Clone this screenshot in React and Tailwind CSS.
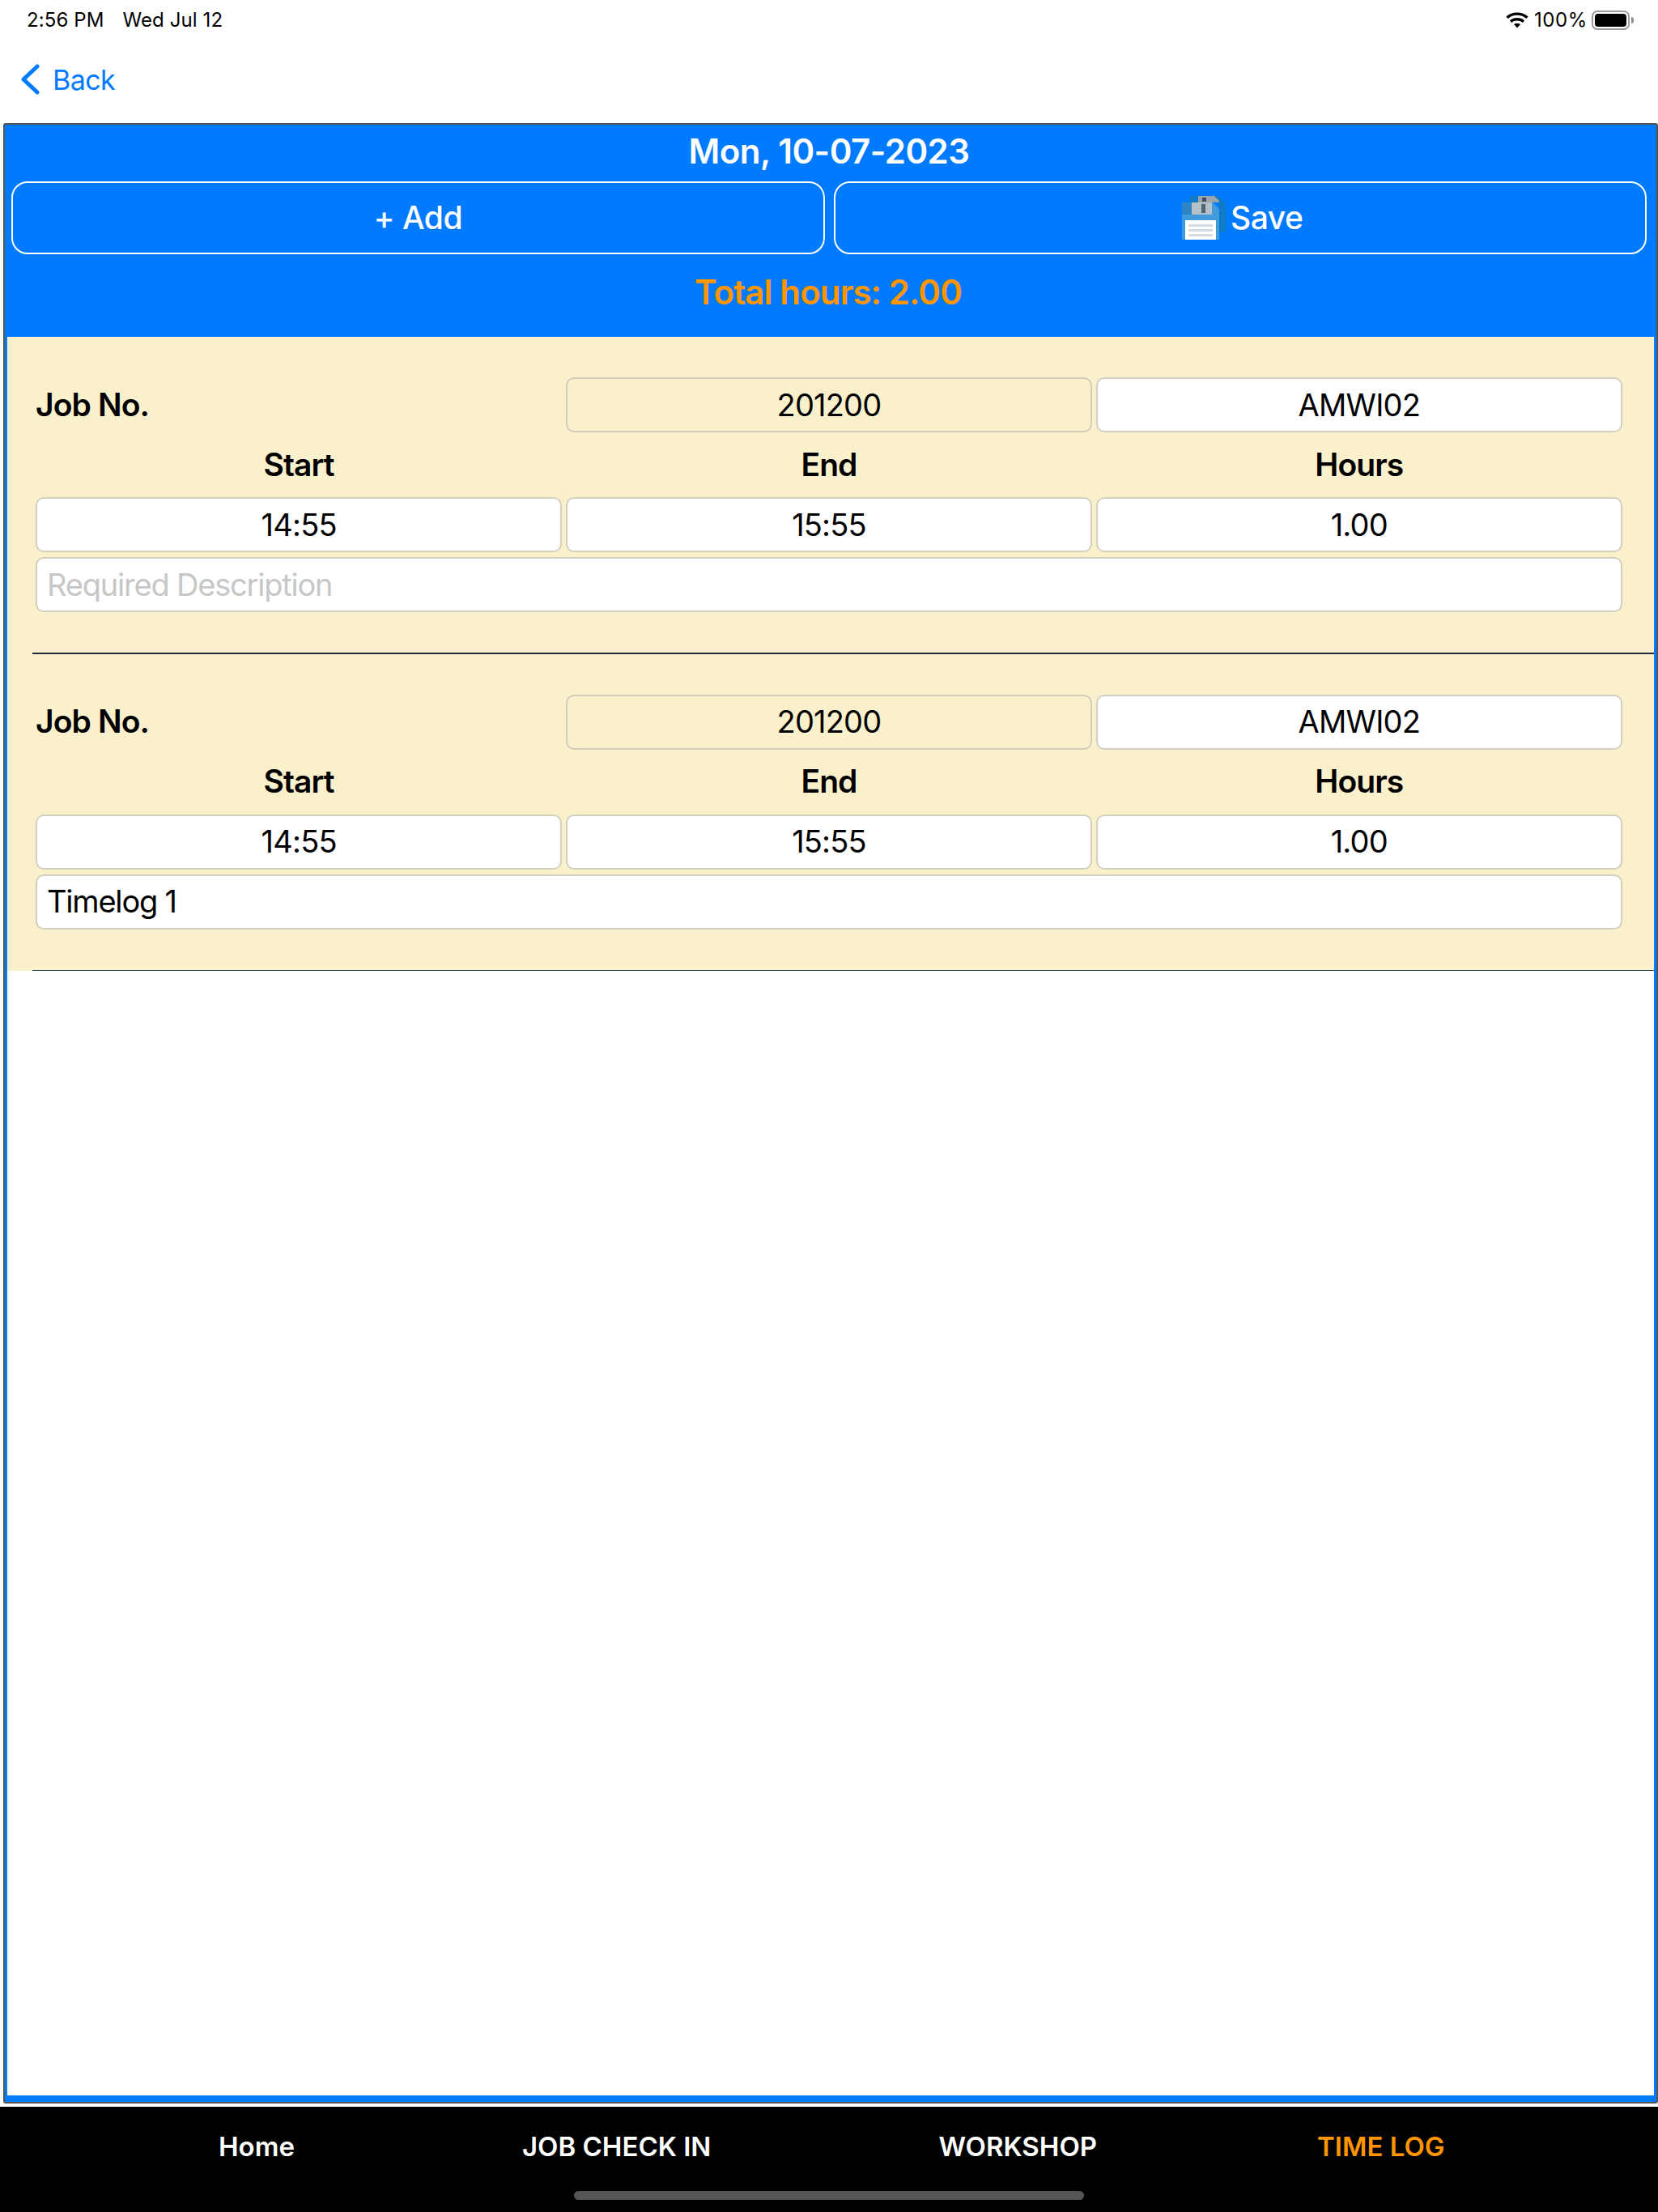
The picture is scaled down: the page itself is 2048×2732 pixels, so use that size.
import React from "react";

const entries = [
  { job: "201200", code: "AMWI02", start: "14:55", end: "15:55", hours: "1.00", description: "" },
  { job: "201200", code: "AMWI02", start: "14:55", end: "15:55", hours: "1.00", description: "Timelog 1" },
];

function Field({ children, tinted }) {
  return (
    <div
      className={`h-[68px] flex items-center justify-center rounded-[10px] border-2 border-[#d3cfbe] text-[38px] tracking-[-0.8px] text-black ${
        tinted ? "bg-[#faf0cb]" : "bg-white"
      }`}
    >
      {children}
    </div>
  );
}

function SaveIcon() {
  return (
    <svg width="54" height="54" viewBox="0 0 54 54">
      <path d="M9 0h36l9 9v36h-8V8H9z" fill="#0f7ac6" />
      <path d="M20 0h20l6 6v2H20z" fill="#9aa5ad" />
      <rect x="25" y="2" width="5" height="5" fill="#3d4f5c" />
      <path d="M0 8h38l8 8v38H0z" fill="#3f9bdc" />
      <path d="M0 8h12v15H0z" fill="#2f84c4" />
      <rect x="12" y="8" width="25" height="15" rx="1" fill="#b4c1c9" />
      <rect x="24" y="10" width="5" height="11" fill="#4e6472" />
      <rect x="4" y="30" width="38" height="24" fill="#ffffff" />
      <rect x="8" y="35" width="30" height="3" fill="#d5dde2" />
      <rect x="8" y="41" width="30" height="3" fill="#d5dde2" />
      <rect x="8" y="47" width="30" height="3" fill="#d5dde2" />
    </svg>
  );
}

function Entry({ entry }) {
  return (
    <div className="bg-[#faf0cb]">
      <div className="pt-[50px] pb-[50px] pl-[35px] pr-[39px]">
        <div className="grid grid-cols-3 gap-[4.5px]">
          <div className="flex items-center text-[39px] font-semibold tracking-[-0.9px] text-black">Job No.</div>
          <Field tinted>{entry.job}</Field>
          <Field>{entry.code}</Field>
        </div>
        <div className="grid grid-cols-3 gap-[4.5px] h-[80px] items-center text-center text-[39px] font-semibold tracking-[-0.9px] text-black">
          <div>Start</div>
          <div>End</div>
          <div>Hours</div>
        </div>
        <div className="grid grid-cols-3 gap-[4.5px]">
          <Field>{entry.start}</Field>
          <Field>{entry.end}</Field>
          <Field>{entry.hours}</Field>
        </div>
        <div
          className={`mt-[6px] h-[68px] flex items-center px-[12px] rounded-[10px] border-2 border-[#d3cfbe] bg-white text-[38px] tracking-[-1.2px] ${
            entry.description ? "text-black" : "text-[#c7c7c7]"
          }`}
        >
          {entry.description || "Required Description"}
        </div>
      </div>
      <div className="ml-[31px] h-[1.5px] bg-[#1c2c40]" />
    </div>
  );
}

export default function App() {
  return (
    <div className="w-[2048px] h-[2732px] flex flex-col bg-white font-['Inter',sans-serif]">
      <div className="h-[52px] shrink-0 flex items-center justify-between pl-[33px] pr-[30px] pb-[3px] text-[24px] text-black">
        <div className="flex gap-[23px] tracking-[0.1px]">
          <span>2:56 PM</span>
          <span>Wed Jul 12</span>
        </div>
        <div className="flex items-center gap-[5px]">
          <svg className="mr-[2px]" width="28" height="20" viewBox="0 0 28 20" fill="none" stroke="#000" strokeWidth="3.4">
            <path d="M1.5 6.8C8.5 0.6 19.5 0.6 26.5 6.8" />
            <path d="M6 11.6C10.6 7.8 17.4 7.8 22 11.6" />
            <path d="M14 19.5l-4-4.4c2.3-1.7 5.7-1.7 8 0z" fill="#000" stroke="none" />
          </svg>
          <span className="tracking-[0.6px]">100%</span>
          <div className="flex items-center gap-[2px]">
            <div className="w-[47px] h-[24px] rounded-[7px] border-2 border-[#9b9b9b] p-[2px]">
              <div className="w-full h-full rounded-[4px] bg-black" />
            </div>
            <div className="w-[3px] h-[8px] rounded-r-full bg-[#8e8e8e]" />
          </div>
        </div>
      </div>

      <div className="h-[100px] shrink-0 flex items-center pl-[25px] pb-[8px] text-[34px] text-[#007aff]">
        <svg width="24" height="38" viewBox="0 0 24 38" fill="none" stroke="#007aff" strokeWidth="5" strokeLinecap="round" strokeLinejoin="round">
          <path d="M21 3L4 19l17 16" />
        </svg>
        <span className="ml-[16px] tracking-[-0.6px]">Back</span>
      </div>

      <div className="flex-1 ml-[4px] flex flex-col rounded-[3px] border-2 border-[#555555]">
        <div className="flex-1 flex flex-col border-[#007aff] border-x-[3px] border-b-[8px]">
          <div className="bg-[#007aff] h-[262px] shrink-0 flex flex-col">
            <div className="h-[70px] flex items-center justify-center pb-[6px] pr-[4px] text-[42px] font-semibold tracking-[-0.5px] text-white">
              Mon, 10-07-2023
            </div>
            <div className="grid grid-cols-2 gap-[11px] pl-[5px] pr-[9px]">
              <button className="h-[90px] flex items-center justify-center rounded-[20px] border-2 border-white text-[39px] font-medium tracking-[-0.5px] text-white">
                + Add
              </button>
              <button className="h-[90px] flex items-center justify-center gap-[6px] pl-[6px] rounded-[20px] border-2 border-white text-[39px] font-medium tracking-[-0.5px] text-white">
                <SaveIcon />
                <span>Save</span>
              </button>
            </div>
            <div className="flex-1 flex items-center justify-center pb-[10px] pr-[6px] text-[42px] font-semibold tracking-[-0.9px] text-[#ff9500]">
              Total hours: 2.00
            </div>
          </div>
          {entries.map((entry, i) => (
            <Entry key={i} entry={entry} />
          ))}
        </div>
      </div>

      <div className="relative mt-[4px] h-[130px] shrink-0 bg-black">
        <div className="h-[100px] flex items-center pl-[270px] text-[33px] font-semibold text-white">
          <span>Home</span>
          <span className="ml-[281px]">JOB CHECK IN</span>
          <span className="ml-[281px]">WORKSHOP</span>
          <span className="ml-[272px] text-[#ff9500]">TIME LOG</span>
        </div>
        <div className="absolute left-[709px] top-[104px] w-[630px] h-[11px] rounded-full bg-[#555555]" />
      </div>
    </div>
  );
}
